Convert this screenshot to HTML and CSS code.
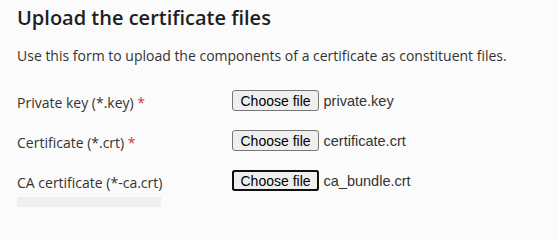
FILE: index.html
```html
<!DOCTYPE html>
<html>
<head>
<meta charset="utf-8">
<link rel="stylesheet" href="styles.css">
</head>
<body>
<div class="page">
  <h2 class="title">Upload the certificate files</h2>
  <p class="intro">Use this form to upload the components of a certificate as constituent files.</p>
  <div class="form">
    <div class="rows">
      <div class="row">
        <label class="label">Private key (*.key) <span class="req">*</span></label>
        <div class="field"><button class="choose">Choose file</button><span class="fname">private.key</span></div>
      </div>
      <div class="row">
        <label class="label">Certificate (*.crt) <span class="req">*</span></label>
        <div class="field"><button class="choose">Choose file</button><span class="fname">certificate.crt</span></div>
      </div>
      <div class="row">
        <label class="label">CA certificate (*-ca.crt)</label>
        <div class="field"><button class="choose focused">Choose file</button><span class="fname">ca_bundle.crt</span></div>
      </div>
    </div>
    <div class="hint"></div>
  </div>
</div>
</body>
</html>
```
FILE: styles.css
```css
html, body {
  margin: 0;
  padding: 0;
  background: #fbfbfb;
}
.page {
  padding: 4px 17px 0 17px;
  font-family: "Open Sans", sans-serif;
  color: #333333;
}
.title {
  margin: 0;
  font-size: 20px;
  font-weight: 600;
  line-height: 28px;
  color: #1f1f1f;
}
.intro {
  margin: 14px 0 0 0;
  font-size: 14px;
  line-height: 20px;
}
.form {
  margin-top: 24px;
}
.rows {
  display: flex;
  flex-direction: column;
  gap: 19px;
}
.row {
  display: flex;
  align-items: center;
  height: 21px;
}
.label {
  width: 215px;
  font-size: 14px;
  line-height: 20px;
  padding-top: 4px;
}
.req {
  color: #d0344a;
}
.field {
  display: flex;
  align-items: center;
}
.choose {
  font-family: "Liberation Sans", Arial, sans-serif;
  font-size: 14px;
  height: 21px;
  padding: 0 7.5px;
  margin: 0 4.5px 0 0;
  background: #efefef;
  color: #000;
  border: 1px solid #767676;
  border-radius: 3px;
}
.choose.focused {
  outline: 2px solid #101010;
  outline-offset: -2px;
  border-color: #101010;
}
.fname {
  font-family: "Liberation Sans", Arial, sans-serif;
  font-size: 14.5px;
  color: #333;
}
.hint {
  margin-top: 6px;
  width: 144px;
  height: 10px;
  background: #efefef;
}
```
